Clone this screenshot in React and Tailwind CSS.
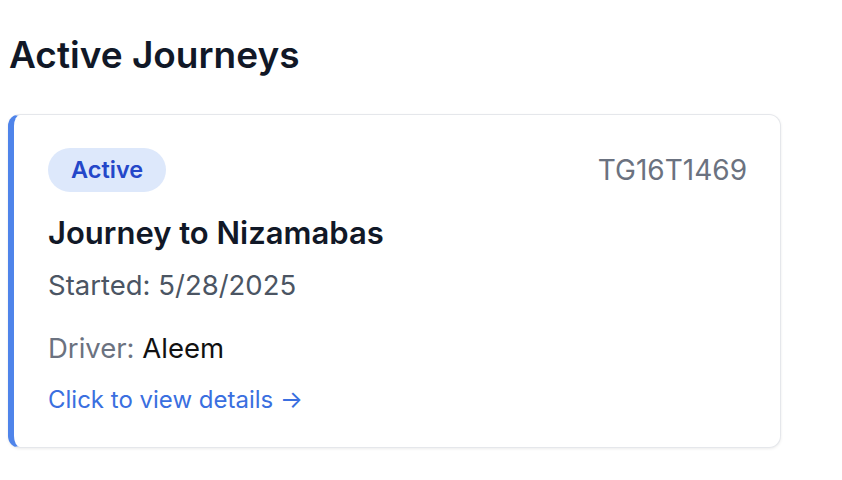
export default function App() {
  return (
    <div className="bg-white min-h-[480px] w-[842px] px-[8px] pt-[27px]" style={{ fontFamily: "Inter, 'Noto Sans', sans-serif" }}>
      <h2 className="text-[37px] leading-[56px] font-semibold text-[#111827] pl-[1px]">Active Journeys</h2>
      <div className="mt-[31px] w-[773px] h-[334px] bg-white rounded-[12px] border border-[#e5e7eb] border-l-[6px] border-l-[#4f84ea] shadow-[0_1px_3px_rgba(0,0,0,0.08)] pl-[34px] pr-[33px] pt-[33px]">
        <div className="flex items-center justify-between h-[44px]">
          <span className="inline-flex items-center h-[44px] px-[23px] rounded-full bg-[#dde8fb] text-[#2447c9] text-[23.5px] font-semibold">Active</span>
          <span className="text-[28px] text-[#6b7280]">TG16T1469</span>
        </div>
        <div className="mt-[21px] text-[31px] leading-[40px] font-semibold text-[#111827]">Journey to Nizamabas</div>
        <div className="mt-[14px] text-[27.5px] leading-[36px] text-[#4b5563]">Started: 5/28/2025</div>
        <div className="mt-[27px] text-[27.5px] leading-[36px]">
          <span className="text-[#6b7280]">Driver: </span>
          <span className="text-[#111111]">Aleem</span>
        </div>
        <div className="mt-[18px] text-[24px] leading-[32px] text-[#3a6fe0]">Click to view details →</div>
      </div>
    </div>
  );
}
